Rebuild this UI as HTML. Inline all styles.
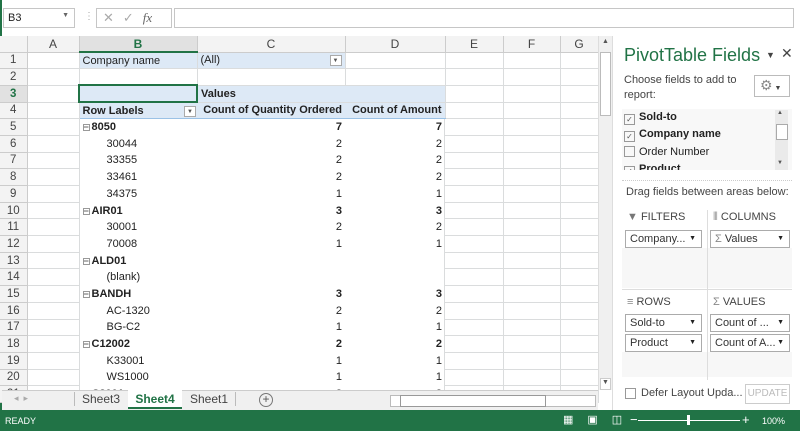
<!DOCTYPE html>
<html><head><meta charset="utf-8"><style>
*{box-sizing:border-box;margin:0;padding:0}
body{width:800px;height:431px;overflow:hidden;background:#fff;font-family:"Liberation Sans",sans-serif;font-size:11px;color:#222;position:relative}
.a{position:absolute}
table{border-collapse:collapse;table-layout:fixed;position:absolute;left:0;top:36px}
td{border-right:1px solid #dadcdd;border-bottom:1px solid #dadcdd;height:16.7px;padding:0 3px;white-space:nowrap;overflow:hidden;font-size:11px}
tr.h td{height:16px;background:#f3f3f3;text-align:center;color:#444;font-size:12px;border-color:#ccc}
td.rh{background:#f3f3f3;text-align:center;color:#444;font-size:11.5px;border-color:#ccc}
.s{background:#dde9f6}
.b{font-weight:bold}
.r{text-align:right}
.top td.p{border-top:1px solid #9bc2e6}
td.p{border-right:none;border-bottom-color:transparent}
td.p.r:last-of-type{}
.i{padding-left:27px}
.m{font-size:9px;color:#666;border:1px solid #999;display:inline-block;width:7px;height:7px;line-height:5px;text-align:center;margin-right:2px;vertical-align:0}
.dd{position:absolute;width:12px;height:11px;border:1px solid #aaa;background:#fff;font-size:6px;text-align:center;line-height:10px;color:#555}
.box{position:absolute;height:18px;border:1px solid #ababab;background:#fff;font-size:11px;padding:2px 4px;color:#333}
.box:after{content:"▼";position:absolute;right:5px;top:4px;font-size:7px;color:#222}
</style></head><body>
<div class="a" style="left:0;top:0;width:800px;height:36px;background:#fff"></div>
<div class="a" style="left:0;top:0;width:2px;height:410px;background:#217346"></div>
<div class="a" style="left:3px;top:8px;width:72px;height:20px;border:1px solid #c6c6c6;font-size:11px;padding:3px 4px">B3<span style="position:absolute;right:5px;top:3px;font-size:7px;color:#666">▼</span></div>
<div class="a" style="left:84px;top:11px;color:#aaa;font-size:10px">⋮</div>
<div class="a" style="left:96px;top:8px;width:76px;height:20px;border:1px solid #c6c6c6;color:#aaa;font-size:13px;padding:1px 6px;letter-spacing:9px">✕✓<i style="font-family:'Liberation Serif';color:#666;letter-spacing:0">fx</i></div>
<div class="a" style="left:174px;top:8px;width:620px;height:20px;border:1px solid #c6c6c6"></div>

<table>
<colgroup><col style="width:27px"><col style="width:52px"><col style="width:118px"><col style="width:148px"><col style="width:100px"><col style="width:58px"><col style="width:57px"><col style="width:38px"></colgroup>
<tr class="h"><td style="background:#f3f3f3"></td><td>A</td><td style="background:#e1e1e1;color:#217346;font-weight:bold;border-bottom:2px solid #217346">B</td><td>C</td><td>D</td><td>E</td><td>F</td><td>G</td></tr>
<tr><td class="rh">1</td><td></td><td class="s">Company name</td><td class="s" style="position:relative">(All)<span class="dd" style="right:3px;top:2px">▼</span></td><td></td><td></td><td></td><td></td></tr>
<tr><td class="rh">2</td><td></td><td></td><td></td><td></td><td></td><td></td><td></td></tr>
<tr><td class="rh" style="background:#e1e1e1;color:#217346;font-weight:bold">3</td><td></td><td class="s" style="border:2px solid #217346"></td><td class="s b" style="border-right:none">Values</td><td class="s" ></td><td></td><td></td><td></td></tr>
<tr><td class="rh">4</td><td></td><td class="s b" style="position:relative;border-right:none;border-bottom:1px solid #9bc2e6">Row Labels<span class="dd" style="right:1px;top:3px">▼</span></td><td class="s b r" style="border-right:none;border-bottom:1px solid #9bc2e6">Count of Quantity Ordered</td><td class="s b r" style="border-bottom:1px solid #9bc2e6">Count of Amount</td><td></td><td></td><td></td></tr>
<tr class="top"><td class="rh">5</td><td></td><td class="p b"><span class="m">−</span>8050</td><td class="p b r">7</td><td class="p b r">7</td><td></td><td></td><td></td></tr>
<tr><td class="rh">6</td><td></td><td class="p i">30044</td><td class="p r">2</td><td class="p r">2</td><td></td><td></td><td></td></tr>
<tr><td class="rh">7</td><td></td><td class="p i">33355</td><td class="p r">2</td><td class="p r">2</td><td></td><td></td><td></td></tr>
<tr><td class="rh">8</td><td></td><td class="p i">33461</td><td class="p r">2</td><td class="p r">2</td><td></td><td></td><td></td></tr>
<tr><td class="rh">9</td><td></td><td class="p i">34375</td><td class="p r">1</td><td class="p r">1</td><td></td><td></td><td></td></tr>
<tr class="top"><td class="rh">10</td><td></td><td class="p b"><span class="m">−</span>AIR01</td><td class="p b r">3</td><td class="p b r">3</td><td></td><td></td><td></td></tr>
<tr><td class="rh">11</td><td></td><td class="p i">30001</td><td class="p r">2</td><td class="p r">2</td><td></td><td></td><td></td></tr>
<tr><td class="rh">12</td><td></td><td class="p i">70008</td><td class="p r">1</td><td class="p r">1</td><td></td><td></td><td></td></tr>
<tr class="top"><td class="rh">13</td><td></td><td class="p b"><span class="m">−</span>ALD01</td><td class="p"></td><td class="p"></td><td></td><td></td><td></td></tr>
<tr><td class="rh">14</td><td></td><td class="p i">(blank)</td><td class="p"></td><td class="p"></td><td></td><td></td><td></td></tr>
<tr class="top"><td class="rh">15</td><td></td><td class="p b"><span class="m">−</span>BANDH</td><td class="p b r">3</td><td class="p b r">3</td><td></td><td></td><td></td></tr>
<tr><td class="rh">16</td><td></td><td class="p i">AC-1320</td><td class="p r">2</td><td class="p r">2</td><td></td><td></td><td></td></tr>
<tr><td class="rh">17</td><td></td><td class="p i">BG-C2</td><td class="p r">1</td><td class="p r">1</td><td></td><td></td><td></td></tr>
<tr class="top"><td class="rh">18</td><td></td><td class="p b"><span class="m">−</span>C12002</td><td class="p b r">2</td><td class="p b r">2</td><td></td><td></td><td></td></tr>
<tr><td class="rh">19</td><td></td><td class="p i">K33001</td><td class="p r">1</td><td class="p r">1</td><td></td><td></td><td></td></tr>
<tr><td class="rh">20</td><td></td><td class="p i">WS1000</td><td class="p r">1</td><td class="p r">1</td><td></td><td></td><td></td></tr>
<tr class="top"><td class="rh">21</td><td></td><td class="p b"><span class="m">−</span>C3001</td><td class="p b r">2</td><td class="p b r">2</td><td></td><td></td><td></td></tr>
</table>
<div class="a" style="left:444px;top:119px;width:1px;height:271px;background:#dadcdd"></div>
<div class="a" style="left:598px;top:36px;width:14px;height:354px;background:#f0f0f0;border-left:1px solid #ddd"></div>
<div class="a" style="left:600px;top:38px;width:11px;height:12px;font-size:7px;color:#555;text-align:center">▲</div>
<div class="a" style="left:600px;top:52px;width:11px;height:64px;background:#fff;border:1px solid #bbb"></div>
<div class="a" style="left:600px;top:378px;width:11px;height:12px;font-size:7px;color:#555;text-align:center;background:#fff;border:1px solid #ccc">▼</div>
<div class="a" style="left:2px;top:390px;width:596px;height:20px;background:#f0f0f0;border-top:1px solid #ccc"></div>
<div class="a" style="left:14px;top:393px;color:#aaa;font-size:9px">◂ &nbsp;▸</div>
<div class="a" style="left:74px;top:392px;font-size:12px;color:#444;border-left:1px solid #bbb;padding:0 7px">Sheet3</div>
<div class="a" style="left:128px;top:390px;width:54px;height:19px;background:#fff;font-size:12px;color:#217346;font-weight:bold;text-align:center;padding-top:2px;border-bottom:2px solid #217346">Sheet4</div>
<div class="a" style="left:183px;top:392px;font-size:12px;color:#444;border-right:1px solid #bbb;padding:0 7px">Sheet1</div>
<div class="a" style="left:259px;top:393px;width:14px;height:14px;border:1px solid #777;border-radius:50%;font-size:12px;line-height:11px;text-align:center;color:#555">+</div>
<div class="a" style="left:390px;top:395px;width:206px;height:12px;background:#fff;border:1px solid #bbb"></div>
<div class="a" style="left:400px;top:395px;width:146px;height:12px;background:#fff;border:1px solid #999"></div>
<div class="a" style="left:612px;top:36px;width:188px;height:374px;background:#fff;border-left:1px solid #ddd"></div>
<div class="a" style="left:624px;top:45px;font-size:18px;color:#217346">PivotTable Fields</div>
<div class="a" style="left:766px;top:50px;font-size:9px;color:#444">▼</div>
<div class="a" style="left:781px;top:45px;font-size:14px;color:#444">✕</div>
<div class="a" style="left:624px;top:73px;font-size:11px;color:#444;line-height:15px">Choose fields to add to<br>report:</div>
<div class="a" style="left:754px;top:75px;width:36px;height:22px;border:1px solid #bbb;color:#888;font-size:14px;padding:1px 5px">⚙<span style="font-size:7px;color:#444"> ▼</span></div>
<div class="a" style="left:622px;top:109px;width:170px;height:61px;background:#f8f8f8;overflow:hidden"></div>
<div class="a" style="left:624px;top:109px;font-size:11px;line-height:17.3px;color:#222;height:61px;overflow:hidden">
<div><span style="display:inline-block;width:11px;height:11px;border:1px solid #999;vertical-align:-2px;font-size:8px;text-align:center;line-height:9px;color:#555;margin-right:4px">✓</span><b>Sold-to</b></div>
<div><span style="display:inline-block;width:11px;height:11px;border:1px solid #999;vertical-align:-2px;font-size:8px;text-align:center;line-height:9px;color:#555;margin-right:4px">✓</span><b>Company name</b></div>
<div><span style="display:inline-block;width:11px;height:11px;border:1px solid #999;vertical-align:-2px;margin-right:4px"></span>Order Number</div>
<div><span style="display:inline-block;width:11px;height:11px;border:1px solid #999;vertical-align:-2px;font-size:8px;text-align:center;line-height:9px;color:#555;margin-right:4px">✓</span><b>Product</b></div>
</div>
<div class="a" style="left:775px;top:110px;width:13px;height:60px;background:#eaeaea"></div>
<div class="a" style="left:776px;top:124px;width:12px;height:16px;background:#fff;border:1px solid #aaa"></div>
<div class="a" style="left:777px;top:110px;font-size:6px;color:#555">▲</div>
<div class="a" style="left:777px;top:160px;font-size:6px;color:#555">▼</div>
<div class="a" style="left:622px;top:180px;width:170px;border-top:1px dotted #ccc"></div>
<div class="a" style="left:626px;top:186px;font-size:11px;color:#444">Drag fields between areas below:</div>
<div class="a" style="left:622px;top:248px;width:170px;height:40px;background:#f7f7f7"></div>
<div class="a" style="left:622px;top:352px;width:170px;height:25px;background:#f7f7f7"></div>
<div class="a" style="left:707px;top:210px;width:1px;height:170px;background:#ddd"></div>
<div class="a" style="left:622px;top:289px;width:170px;height:1px;background:#ddd"></div>
<div class="a" style="left:627px;top:211px;font-size:11px;color:#444"><span style="color:#777">▼</span> FILTERS</div>
<div class="a" style="left:713px;top:211px;font-size:11px;color:#444"><span style="color:#888">⦀</span> COLUMNS</div>
<div class="a" style="left:627px;top:296px;font-size:11px;color:#444"><span style="color:#888">≡</span> ROWS</div>
<div class="a" style="left:713px;top:296px;font-size:11px;color:#444"><span style="color:#888">Σ</span> VALUES</div>
<div class="box" style="left:625px;top:230px;width:77px">Company...</div>
<div class="box" style="left:710px;top:230px;width:80px"><span style="color:#888">Σ</span> Values</div>
<div class="box" style="left:625px;top:314px;width:77px">Sold-to</div>
<div class="box" style="left:625px;top:334px;width:77px">Product</div>
<div class="box" style="left:710px;top:314px;width:80px">Count of ...</div>
<div class="box" style="left:710px;top:334px;width:80px">Count of A...</div>
<div class="a" style="left:625px;top:388px;width:11px;height:11px;border:1px solid #999"></div>
<div class="a" style="left:641px;top:387px;font-size:11px;color:#444">Defer Layout Upda...</div>
<div class="a" style="left:745px;top:384px;width:45px;height:20px;border:1px solid #ccc;color:#bbb;font-size:10px;text-align:center;line-height:18px">UPDATE</div>
<div class="a" style="left:0;top:410px;width:800px;height:21px;background:#217346;color:#fff;font-size:10px"></div>
<div class="a" style="left:5px;top:416px;color:#fff;font-size:9px">READY</div>
<div class="a" style="left:563px;top:413px;color:#fff;font-size:11px;letter-spacing:14px">▦▣◫</div>
<div class="a" style="left:638px;top:420px;width:102px;height:1px;background:#fff"></div>
<div class="a" style="left:630px;top:412px;color:#fff;font-size:13px">−</div>
<div class="a" style="left:742px;top:412px;color:#fff;font-size:13px">+</div>
<div class="a" style="left:687px;top:415px;width:3px;height:10px;background:#fff"></div>
<div class="a" style="left:762px;top:416px;color:#fff;font-size:9px">100%</div>
</body></html>
